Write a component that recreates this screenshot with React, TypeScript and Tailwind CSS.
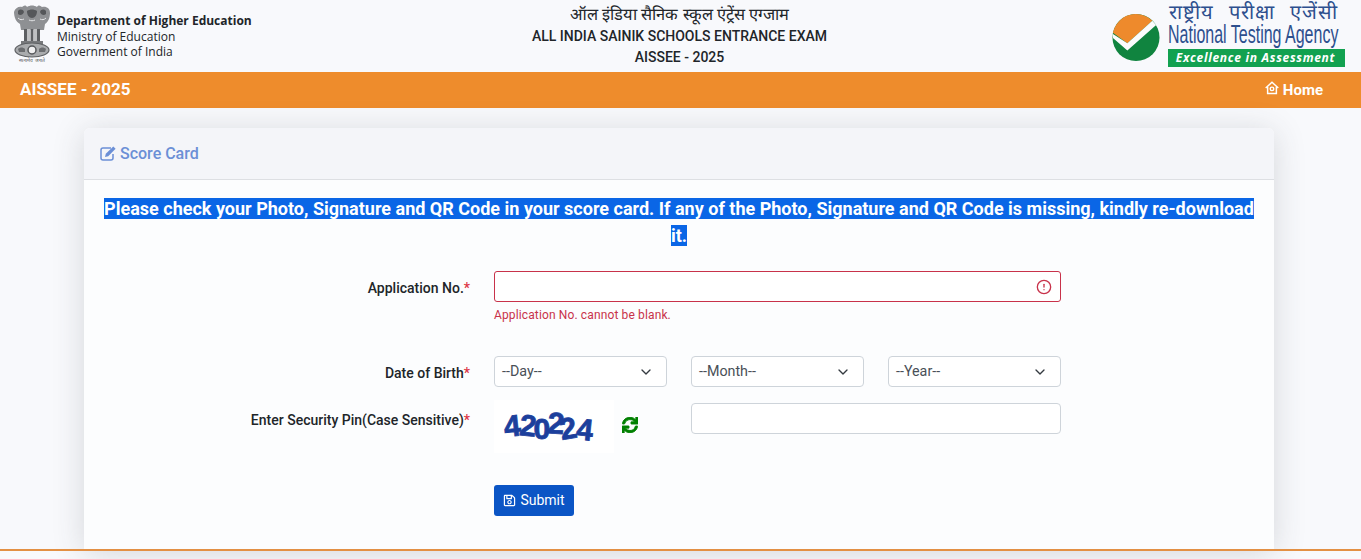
import React from 'react';
import { ChevronDown, CircleAlert } from 'lucide-react';
import { FaRegSave, FaSync } from 'react-icons/fa';

// ===== SMALL DRAWINGS =====
const Emblem = () => (
  <svg width="38" height="58" viewBox="0 0 38 58" className="shrink-0">
    {/* lions */}
    <path d="M1 7c1-4 5-6 8-5 2-2 4-2 5 0 3-2 7-2 10 0 1-2 3-2 5 0 4-1 8 1 8 6 0 5-2 9-5 11l-1 6H8l-1-6C3 17 1 12 1 7Z" fill="#8e9093" />
    <path d="M5 6c2-2 5-2 6 1-1 3-4 4-6 2ZM27 7c1-3 4-3 6-1v3c-2 2-5 1-6-2ZM14 6c3-2 7-2 10 0 0 4-2 7-5 7s-5-3-5-7Z" fill="#55575a" />
    <path d="M5 13c2 2 4 2 6 1M27 14c2 1 4 1 6-1M16 15c2 1 4 1 6 0" stroke="#e4e5e7" strokeWidth="1" fill="none" />
    {/* body */}
    <path d="M11 24h3v13h-3zM17.5 24h3v13h-3zM24 24h3v13h-3z" fill="#5d5f62" />
    <path d="M14 24h3.5v13H14zM20.5 24H24v13h-3.5z" fill="#bfc0c2" />
    <rect x="8" y="36" width="22" height="3" fill="#77797c" />
    {/* abacus */}
    <ellipse cx="19" cy="45" rx="17" ry="7" fill="#a9abad" />
    <ellipse cx="19" cy="45" rx="17" ry="7" fill="none" stroke="#5d5f62" strokeWidth="1.2" />
    <circle cx="19" cy="45" r="4" fill="#f0f0f1" stroke="#55575a" strokeWidth="1.5" />
    <path d="M5 44c2-2 5-2 7 0v3H6ZM26 44c2-2 5-2 7 0l-1 3h-6Z" fill="#6b6d70" />
    <text x="19" y="57" textAnchor="middle" fontSize="5" fill="#55575a">सत्यमेव जयते</text>
  </svg>
);

const NtaMark = () => (
  <svg width="48" height="49" viewBox="0 0 50 50" className="shrink-0">
    <circle cx="25" cy="25" r="24.5" fill="#10843f" />
    <path d="M1 20A24.5 24.5 0 0 1 42 7.5L16 31Z" fill="#ee8a2c" />
    <path d="M0.6 21 16 31 42 7.5 46 12 16 38.500 1 25.500Z" fill="#fbfcfd" />
  </svg>
);

const HomeIcon = () => (
  <svg width="14" height="14" viewBox="0 0 16 16" fill="none" stroke="currentColor" strokeWidth="1.7" className="shrink-0">
    <path d="M0.8 8 8 1.500 15.200 8" />
    <path d="M3 6.500V14.200h10V6.500" />
    <circle cx="8" cy="9" r="2" />
  </svg>
);

const EditIcon = () => (
  <svg width="16" height="15" viewBox="0 0 16 15" className="shrink-0">
    <path d="M11 2H3a2 2 0 0 0-2 2v8a2 2 0 0 0 2 2h8a2 2 0 0 0 2-2V8" fill="none" stroke="currentColor" strokeWidth="1.500" />
    <path d="M13.300 0.500 15.600 2.800 8.200 10.200 5 11 5.800 7.800Z" fill="currentColor" />
  </svg>
);

// captcha picture: wobbly digits, kept as one text run
const Captcha = () => (
  <svg width="120" height="53" viewBox="0 0 120 53">
    <text
      x="11"
      y="37"
      dx="0 -3 -2 -3 -2 -3"
      dy="0 -2 4 -6 7 -1"
      rotate="-6 6 0 4 -10 6"
      fontSize="30"
      fontWeight="700"
      fontFamily="'Liberation Sans', sans-serif"
      fill="#1c3f9c"
      stroke="#1c3f9c"
      strokeWidth="0.8"
    >
      420224
    </text>
  </svg>
);

const Label = ({ text, className }: { text: string; className: string }) => (
  <label className={`w-[386px] shrink-0 text-right text-[14px] font-medium text-[#212529] ${className}`}>
    {text}
    <span className="text-[#dc3545]">*</span>
  </label>
);

const DateSelect = ({ text }: { text: string }) => (
  <div className="flex h-[31px] w-[173px] items-center justify-between rounded-[4px] border border-[#ced4da] bg-white pl-[7px] pr-[12px] text-[14.3px] text-[#495057]">
    <span>{text}</span>
    <ChevronDown size={16} strokeWidth={2} className="text-[#343a40]" />
  </div>
);

const App: React.FC = () => {
  return (
    <div className="h-[559px] overflow-hidden bg-[#f8f9fc] font-['Roboto',sans-serif]">
      {/* Top header */}
      <header className="grid h-[72px] grid-cols-[1fr_auto_1fr] items-start">
        <div className="flex items-start gap-[6px] pl-[13px] pt-[5px]">
          <Emblem />
          <div className="pt-[8px] text-[12px] leading-[15.5px] text-[#212529] font-['Open_Sans',sans-serif]">
            <p className="font-bold">Department of Higher Education</p>
            <p>Ministry of Education</p>
            <p>Government of India</p>
          </div>
        </div>

        <div className="pr-[2px] pt-[4px] text-center text-[#212529]">
          <p className="text-[16.4px] leading-[21px]">ऑल इंडिया सैनिक स्कूल एंट्रेंस एग्जाम</p>
          <p className="mt-[1px] text-[14px] font-medium leading-[21px]">ALL INDIA SAINIK SCHOOLS ENTRANCE EXAM</p>
          <p className="text-[14px] font-medium leading-[21px]">AISSEE - 2025</p>
        </div>

        <div className="flex items-start justify-end gap-[8px] pr-[16px] pt-[13px]">
          <NtaMark />
          <div className="-mt-[10px] w-[177px]">
            <p className="whitespace-nowrap pl-[1px] text-[20px] leading-[19px] tracking-[1px] text-[#2d4f8e] [word-spacing:9px]">राष्ट्रीय परीक्षा एजेंसी</p>
            <p className="origin-left scale-x-[0.615] whitespace-nowrap text-[26px] leading-[24px] text-[#2d4f8e] font-['Liberation_Sans',sans-serif]">
              National Testing Agency
            </p>
            <p className="mt-[3px] h-[18px] bg-[#12a150] pr-[2px] text-center text-[12px] font-bold italic leading-[18px] tracking-[0.7px] text-white font-['Open_Sans',sans-serif]">
              Excellence in Assessment
            </p>
          </div>
        </div>
      </header>

      {/* Orange nav */}
      <nav className="flex h-[36px] items-center justify-between bg-[#ee8c2c] pl-[20px] pr-[38px] text-white">
        <span className="text-[17px] font-bold">AISSEE - 2025</span>
        <a className="flex items-center gap-[4px] text-[15px] font-bold">
          <span className="-mt-[4px]"><HomeIcon /></span>
          Home
        </a>
      </nav>

      {/* Score card */}
      <main className="ml-[84px] mr-[87px] mt-[20px] h-[421px] rounded-t-[6px] bg-[#fcfdfe] shadow-[0_4px_32px_rgba(58,59,69,0.18)]">
        <div className="flex h-[52px] items-center gap-[4px] rounded-t-[6px] border-b border-[#dddfe3] bg-[#f4f5f9] pl-[16px] text-[16px] font-medium text-[#6b8fd6]">
          <EditIcon />
          <span>Score Card</span>
        </div>

        <div className="px-[20px] pt-[15px] text-center text-[18px] font-bold leading-[27px] text-white">
          <span className="bg-[#0a66e6]">
            Please check your Photo, Signature and QR Code in your score card. If any of the Photo, Signature and QR Code is missing, kindly re-download it.
          </span>
        </div>

        <form className="pt-[22px]">
          <div className="flex gap-[24px]">
            <Label text="Application No." className="pt-[7px]" />
            <div className="w-[567px]">
              <div className="flex h-[31px] items-center justify-end rounded-[3px] border border-[#c8324a] bg-white pr-[8px]">
                <CircleAlert size={16} strokeWidth={2} className="text-[#c8324a]" />
              </div>
              <p className="mt-[6px] text-[12px] leading-[14px] tracking-[0.13px] text-[#c8324a]">Application No. cannot be blank.</p>
            </div>
          </div>

          <div className="mt-[34px] flex gap-[24px]">
            <Label text="Date of Birth" className="pt-[7px]" />
            <div className="flex w-[567px] justify-between">
              <DateSelect text="--Day--" />
              <DateSelect text="--Month--" />
              <DateSelect text="--Year--" />
            </div>
          </div>

          <div className="mt-[13px] flex gap-[24px]">
            <Label text="Enter Security Pin(Case Sensitive)" className="pt-[10px]" />
            <div className="flex w-[567px] items-start">
              <div className="h-[53px] w-[120px] bg-white">
                <Captcha />
              </div>
              <span className="ml-[8px] mt-[17px] w-[69px] text-[#008000]">
                <FaSync size={16} strokeWidth={30} />
              </span>
              <div className="mt-[3px] h-[31px] w-[370px] rounded-[4px] border border-[#ced4da] bg-white" />
            </div>
          </div>

          <div className="mt-[32px] pl-[410px]">
            <button type="button" className="flex h-[31px] w-[80px] items-center justify-center gap-[4px] rounded-[3px] bg-[#0b55c5] text-[14px] text-white">
              <FaRegSave size={13} />
              Submit
            </button>
          </div>
        </form>
      </main>

      {/* Footer rule */}
      <div className="h-[2px] bg-[#e39044]" />
    </div>
  );
};

export default App;
